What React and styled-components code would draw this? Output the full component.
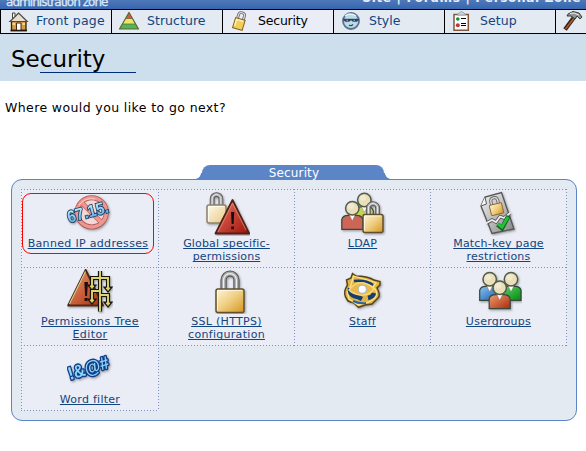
import React from "react";
import styled, { createGlobalStyle } from "styled-components";

const Global = createGlobalStyle`
  * { box-sizing: border-box; }
  body { margin: 0; background: #fff; overflow: hidden; font-family: "DejaVu Sans", sans-serif; color: #000; }
  svg { display: block; flex: none; }
`;

const Page = styled.div`
  width: 586px;
  height: 451px;
  overflow: hidden;
`;

const TopBar = styled.header`
  display: flex;
  justify-content: space-between;
  align-items: flex-end;
  height: 9px;
  padding: 0 5px 0 6px;
  overflow: hidden;
  background: linear-gradient(#4e79b9, #3766ae);
`;

const Brand = styled.span`
  font: 12px/14px "DejaVu Sans", sans-serif;
  letter-spacing: -0.95px;
  -webkit-text-stroke: 0.3px #d9e8fa;
  color: #d9e8fa;
  white-space: pre;
`;

const SiteLinks = styled.span`
  font: bold 12px/14px "DejaVu Sans", sans-serif;
  letter-spacing: 0.68px;
  margin-bottom: 4px;
  color: #e6effa;
  white-space: pre;
`;

const Nav = styled.nav`
  display: flex;
  height: 25px;
  width: 667px;
  border: solid #000;
  border-width: 1px 0;
  background: #e3eaf2;
`;

const NavItem = styled.a`
  display: flex;
  align-items: center;
  flex: 0 0 111px;
  padding-left: 3px;
  border-left: 1px solid #000;
  background: ${(p) => (p.$active ? "#eaedf5" : "#e3eaf2")};
  color: ${(p) => (p.$active ? "#000" : "#124480")};
  font-size: 12.5px;
  line-height: 22px;
  letter-spacing: ${(p) => p.$spacing || 0}px;
  white-space: nowrap;
  svg { margin-right: 4px; }
  span { padding-bottom: 2px; }
`;

const TitleBand = styled.div`
  height: 47px;
  padding-left: 11px;
  background: #cddeec;
`;

const Title = styled.h1`
  margin: 0;
  height: 38px;
  padding-top: 9px;
  font-size: 23px;
  line-height: 32px;
  font-weight: 400;
  letter-spacing: 0;
`;

const TitleRule = styled.div`
  width: 96px;
  height: 1px;
  margin-left: 29px;
  background: #002e78;
`;

const Question = styled.p`
  margin: 19px 0 0 5px;
  height: 65px;
  font-size: 12.5px;
  line-height: 16px;
  letter-spacing: 0.39px;
`;

const PanelTab = styled.div`
  position: relative;
  display: flex;
  justify-content: center;
  width: 182px;
  height: 14px;
  margin: 0 0 0 202px;
  padding-left: 2px;
  border-radius: 8px 8px 0 0;
  background: #5b85c6;
  color: #fff;
  font-size: 12px;
  line-height: 16px;
  letter-spacing: 0.15px;

  &::before,
  &::after {
    content: "";
    position: absolute;
    bottom: 0;
    width: 7px;
    height: 6px;
  }
  &::before {
    right: 100%;
    background: radial-gradient(circle at 0 0, transparent 5.5px, #5b85c6 6.2px);
  }
  &::after {
    left: 100%;
    background: radial-gradient(circle at 100% 0, transparent 5.5px, #5b85c6 6.2px);
  }
`;

const Panel = styled.section`
  width: 566px;
  height: 242px;
  margin-left: 11px;
  padding: 9px;
  border: 1px solid #5b85c6;
  border-radius: 11px;
  background: #e3eaf1;
`;

const Grid = styled.div`
  display: grid;
  grid-template-columns: 137px 136px 136px 136px;
  grid-template-rows: 78px 78px 65px;
  width: 546px;
  height: 222px;
`;

const dots = (dir) =>
  `repeating-linear-gradient(${dir}, #7f90bd 0 1px, transparent 1px 3px)`;

const Cell = styled.div`
  display: flex;
  flex-direction: column;
  align-items: center;
  margin: 0 -1px -1px 0;
  padding-top: 1px;
  background:
    ${dots("to right")} top / 100% 1px no-repeat,
    ${dots("to right")} bottom / 100% 1px no-repeat,
    ${dots("to bottom")} left / 1px 100% no-repeat,
    ${dots("to bottom")} right / 1px 100% no-repeat,
    #eaedf5;
`;

const Highlight = styled.div`
  display: flex;
  flex-direction: column;
  align-items: center;
  width: 132px;
  height: 61px;
  margin: 3px 4px 0 0;
  border: 1px solid #f00;
  border-radius: 9px;
  svg { margin: -4px 0 0 2px; }
`;

const Label = styled.a`
  display: block;
  margin-top: 1px;
  color: #124480;
  font-size: 11px;
  line-height: 13px;
  letter-spacing: ${(p) => p.$spacing || 0}px;
  text-align: center;
  text-decoration: underline;
  text-underline-offset: 1px;
  text-decoration-skip-ink: none;
  white-space: pre;
`;

const IconFrame = ({ children }) => (
  <svg width="46" height="46" viewBox="0 0 46 46">
    <defs>
      <linearGradient id="gold" x1="0" y1="0" x2="1" y2="1">
        <stop offset="0" stopColor="#fff7d8" /><stop offset=".5" stopColor="#efce80" /><stop offset="1" stopColor="#d69420" />
      </linearGradient>
      <linearGradient id="paleGold" x1="0" y1="0" x2="1" y2="1">
        <stop offset="0" stopColor="#fffbea" /><stop offset="1" stopColor="#e7c884" />
      </linearGradient>
      <linearGradient id="red" x1="0" y1="0" x2="1" y2="1">
        <stop offset="0" stopColor="#ed7768" /><stop offset="1" stopColor="#9e1208" />
      </linearGradient>
      <linearGradient id="rust" x1="0" y1="0" x2="1" y2="1">
        <stop offset="0" stopColor="#ef9c70" /><stop offset="1" stopColor="#a82a0b" />
      </linearGradient>
      <linearGradient id="blue" x1="0" y1="0" x2="1" y2="1">
        <stop offset="0" stopColor="#8bc4f3" /><stop offset="1" stopColor="#1558a8" />
      </linearGradient>
      <linearGradient id="green" x1="0" y1="0" x2="1" y2="1">
        <stop offset="0" stopColor="#59d767" /><stop offset="1" stopColor="#078910" />
      </linearGradient>
      <linearGradient id="steel" x1="0" y1="0" x2="1" y2="1">
        <stop offset="0" stopColor="#f4f4f4" /><stop offset="1" stopColor="#858585" />
      </linearGradient>
      <linearGradient id="ice" x1="0" y1="0" x2="0" y2="1">
        <stop offset="0" stopColor="#d5f8ff" /><stop offset="1" stopColor="#47a2e7" />
      </linearGradient>
      <filter id="soft" x="-20%" y="-20%" width="150%" height="150%">
        <feDropShadow dx="1" dy="1.2" stdDeviation=".8" floodColor="#444" floodOpacity=".5" />
      </filter>
    </defs>
    <g filter="url(#soft)">{children}</g>
  </svg>
);

const Padlock = ({ x, y, w, h, rise, fill = "gold", edge = "#60502f" }) => {
  const l = x + w * 0.27;
  const r = x + w * 0.73;
  const radius = (r - l) / 2;
  const d = `M${l} ${y + 1}V${y - rise + radius}A${radius} ${radius} 0 0 1 ${r} ${y - rise + radius}V${y + 1}`;
  const k = w > 24 ? 1.25 : 0.95;
  return (
    <g>
      <path d={d} fill="none" stroke="#575757" strokeWidth={5 * k} />
      <path d={d} fill="none" stroke="#a9a9a9" strokeWidth={3.2 * k} />
      <path d={d} fill="none" stroke="#efefef" strokeWidth={1 * k} />
      <rect x={x} y={y} width={w} height={h} rx="2" fill={`url(#${fill})`} stroke={edge} strokeWidth="1.5" />
      <path d={`M${x + 1.5} ${y + h - 2}V${y + 1.5}H${x + w - 2}`} fill="none" stroke="#fff" strokeOpacity=".65" />
    </g>
  );
};

const Person = ({ cx, cy, fill, w = 20 }) => (
  <g>
    <path
      d={`M${cx - w / 2} ${cy + 21}V${cy + 11}Q${cx - w / 2 + 1} ${cy + 7} ${cx - 4} ${cy + 7}H${cx + 4}Q${cx + w / 2 - 1} ${cy + 7} ${cx + w / 2} ${cy + 11}V${cy + 21}Z`}
      fill={fill} stroke="#36483c" strokeWidth="1.2"
    />
    <path d={`M${cx - 3.2} ${cy + 6}L${cx} ${cy + 12.5}L${cx + 3.2} ${cy + 6}Z`} fill="#fff" stroke="#866" strokeWidth=".4" />
    <circle cx={cx} cy={cy} r="6.7" fill="#eadfb8" stroke="#505d4b" strokeWidth="1.5" />
    <ellipse cx={cx - 1.5} cy={cy - 2} rx="3.3" ry="2.7" fill="#fff" opacity=".35" />
  </g>
);

const art = {
  banned: (
    <>
      <g fill="none">
        <circle cx="25.7" cy="22.3" r="14.6" fill="#f4d6d5" stroke="#a95b59" strokeWidth="5" />
        <path d="M15 12L36 33" stroke="#b56b69" strokeWidth="5" />
        <circle cx="25.7" cy="22.3" r="14.6" stroke="#ee9690" strokeWidth="3.5" />
        <path d="M15 12L36 33" stroke="#ee9690" strokeWidth="3.5" />
        <path d="M13 15Q19 7 29 9" stroke="#ffd1c9" strokeWidth="1" />
      </g>
      <text x="3" y="33" transform="rotate(-15 3 33)" fontFamily="Liberation Sans" fontSize="17" fontWeight="bold"
        textLength="42" lengthAdjust="spacingAndGlyphs" fill="url(#ice)" stroke="#17395c" strokeWidth="1.8" paintOrder="stroke">67.15.</text>
    </>
  ),
  warning: (
    <>
      <Padlock x={3} y={15} w={19} h={18} rise={10.5} fill="paleGold" edge="#8e836c" />
      <path d="M28.5 10L11.5 43.5H45.2Z" fill="url(#red)" stroke="#502018" strokeWidth="1.8" strokeLinejoin="round" />
      <path d="M14 42L28.5 13L42 40" fill="none" stroke="#f29383" strokeWidth=".7" />
      <path d="M27 22H30.3L29.6 34H27.7ZM27.3 36.5H30V39.3H27.3Z" fill="#180b08" />
    </>
  ),
  ldap: (
    <>
      <Person cx={24.3} cy={10} fill="#c5d356" w={18} />
      <Person cx={12.3} cy={18.3} fill="#ce6658" w={21} />
      <Padlock x={23} y={24.5} w={20} h={18} rise={11} />
    </>
  ),
  matchKey: (
    <>
      <path d="M5 16L9 7L25.5 2.5L38 39L16 43.5Z" fill="url(#steel)" stroke="#555" strokeWidth="1.3" />
      <path d="M5 16L10.5 14L9 7" fill="#fafafa" stroke="#555" />
      <path d="M11 33L16 30L20 32L24 26.5L28 28L34 23" fill="none" stroke="#555" strokeWidth="3.5" />
      <path d="M10 33.3L16 30L20 32L24 26.5L28 28L34.5 22.7" fill="none" stroke="#eee" strokeWidth="1.8" />
      <g transform="rotate(-14 20 18)">
        <path d="M16.5 14V11Q16.5 7.5 20 7.5T23.5 11V14" fill="none" stroke="#666" strokeWidth="3.2" />
        <path d="M16.5 14V11Q16.5 7.5 20 7.5T23.5 11V14" fill="none" stroke="#ddd" strokeWidth="1.4" />
        <rect x="14" y="14" width="12.5" height="10.5" rx="1" fill="url(#gold)" stroke="#8e6b2d" />
      </g>
      <path d="M21.5 34.5L26 38L32.5 26" fill="none" stroke="#11651c" strokeWidth="4.7" />
      <path d="M22 34L26 37L32 27" fill="none" stroke="#28bd3a" strokeWidth="3" />
    </>
  ),
  tree: (
    <>
      <path d="M18.7 2L1.2 37.5H36Z" fill="url(#rust)" stroke="#4e2b15" strokeWidth="2" strokeLinejoin="round" />
      <path d="M2.5 36L18.5 3.5" stroke="#e4cf94" strokeWidth="1.2" />
      <path d="M17.3 14H21L20 28H18.2ZM17.5 30H20.5V33H17.5Z" fill="#200e08" />
      {[["#17150c", 4.2], ["#ded56f", 1.9]].map(([stroke, width]) => (
        <g key={stroke} fill={stroke} stroke={stroke} strokeWidth={width}>
          <path d="M33 3V43.5M25 19V10H41V20M25 33V23H33M33 27H41V35" fill="none" />
          <path d="M23 18H27L25 20.5ZM39 20H43L41 22.5ZM23 32H27L25 34.5ZM39 35H43L41 37.5Z" strokeWidth={width - 1} />
        </g>
      ))}
    </>
  ),
  padlock: <Padlock x={12} y={21} w={28} h={23.5} rise={15.5} />,
  staff: (
    <>
      <path d="M12.5 5.5L16 8Q27 8 34 12L40 13.5V17L37 20Q41 27 38 30L32 36L25 37L18.5 39.5L14 35L8 33L5.5 29Q3 24 7.5 17L6.5 12L11 10Z" fill="#dfb443" stroke="#56441e" strokeWidth="1.5" />
      <path d="M13.5 8L31 13L36 15L33 19Q39 24 35 30L29 34L18 37L9 31L7.5 24L11 17Z" fill="none" stroke="#ffe58a" strokeWidth="1.3" />
      <path d="M14 13Q26 12 33 17" fill="none" stroke="#123e77" strokeWidth="2.5" />
      <path d="M10 20Q9 28 18 29L22 31M28 30Q33 29 34 25" fill="none" stroke="#123e77" strokeWidth="4.5" />
      <path d="M9 22Q16 13 24 15Q31 17 34 21Q29 28 20 27Q13 26 9 22Z" fill="#eaba48" stroke="#fadc76" strokeWidth="1.4" />
      <circle cx="22.3" cy="21.3" r="4.2" fill="#fff" stroke="#b9bbb6" strokeWidth="1.4" />
      <path d="M13 33Q19 36 26 35" fill="none" stroke="#2a65a8" strokeWidth="2" />
    </>
  ),
  groups: (
    <>
      <Person cx={13.7} cy={11.3} fill="url(#blue)" />
      <Person cx={35} cy={11.3} fill="url(#green)" />
      <Person cx={23.7} cy={19.7} fill="url(#rust)" w={21} />
    </>
  ),
  words: (
    <text x="3" y="34" transform="rotate(-17 3 34)" fontFamily="Liberation Sans" fontSize="18" fontWeight="bold"
      textLength="42" lengthAdjust="spacingAndGlyphs" fill="#8cd6fb" stroke="#123d88" strokeWidth="2.8" strokeLinejoin="round" paintOrder="stroke">!&amp;@#</text>
  ),
};

const NavFrame = ({ children }) => <svg width="28" height="23" viewBox="0 0 28 23">{children}</svg>;

const navItems = [
  {
    text: "Front page", spacing: 0.2, icon: (
      <>
        <path d="M8.5 8V3H11V6" fill="#fff" stroke="#444" />
        <path d="M7.5 11V20.5H22V11" fill="#d69b48" stroke="#36220b" strokeWidth="1.3" />
        <path d="M14.7 3L6 11.5H23.2Z" fill="#e6dfcf" stroke="#4e4a43" strokeWidth="1.2" />
        <path d="M12.5 20V13H17V20" fill="#fff" stroke="#4b2b0c" />
        <path d="M8.5 14H11M18.5 14H21" stroke="#f8d58d" strokeWidth="2" />
        <path d="M6.5 20.5H23" stroke="#24170a" strokeWidth="1.5" />
      </>
    ),
  },
  {
    text: "Structure", spacing: 0.05, icon: (
      <>
        <path d="M14 2.5L4.5 19H23.5Z" fill="#54b554" />
        <path d="M14 2.5L7.3 14H20.7Z" fill="#eee36d" />
        <path d="M14 2.5L10.5 8.5H17.5Z" fill="#e45342" />
        <path d="M14 2.5L4.5 19H23.5Z" fill="none" stroke="#5e6634" strokeWidth="1.2" strokeLinejoin="round" />
        <path d="M10.5 8.5H17.5M7 14H21" stroke="#626c3e" strokeWidth=".8" />
      </>
    ),
  },
  {
    text: "Security", active: true, spacing: -0.2, icon: (
      <g transform="rotate(17 14 12)">
        <path d="M10.5 10V5Q10.5 2.5 13.5 2.5T16.5 5V10" fill="none" stroke="#666" strokeWidth="2.8" />
        <path d="M10.5 10V5Q10.5 2.5 13.5 2.5T16.5 5V10" fill="none" stroke="#ddd" strokeWidth="1.2" />
        <path d="M8.5 9H18.5V19.5H8.5Z" fill="#f0cf58" stroke="#80601f" />
        <path d="M10 17V10.5H17" stroke="#fff5bb" strokeWidth="1.4" fill="none" />
      </g>
    ),
  },
  {
    text: "Style", icon: (
      <>
        <circle cx="14" cy="11" r="8" fill="#b8dde4" stroke="#5e6f91" strokeWidth="1.8" />
        <path d="M8 6Q13 2 19 6" stroke="#e5f7f7" fill="none" strokeWidth="1.5" />
        <path d="M6 9H22L20 11.5H16L14 10L12 11.5H8Z" fill="#343861" stroke="#343861" strokeWidth=".4" />
        <path d="M9.5 10.3H11M16.5 10.3H18" stroke="#7fc1dd" />
        <path d="M12 15Q14 16.5 16 14.5" fill="none" stroke="#284965" strokeWidth="1.1" />
      </>
    ),
  },
  {
    text: "Setup", spacing: 0.1, icon: (
      <>
        <path d="M6 4.5H20.3V20.3H6Z" fill="#fff" stroke="#81583e" strokeWidth="1.5" />
        <path d="M9 5L11 3L13.3 1.5L16 3L18 5Z" fill="#ccd8df" stroke="#7e8b92" strokeWidth=".7" />
        <circle cx="9.8" cy="9" r="1.8" fill="#188b2e" />
        <circle cx="9.8" cy="15.2" r="2" fill="#ba3836" />
        <path d="M13 8.5H18M13 13.5H18M13 15.5H18" stroke="#000" />
      </>
    ),
  },
  {
    text: "", icon: (
      <>
        <path d="M16 6L6 19.5" stroke="#3d2211" strokeWidth="4.2" />
        <path d="M15.5 7.5L6.5 19" stroke="#9b6039" strokeWidth="1.7" />
        <path d="M9 4L14 1.5L20 3L23 7L21 9L18 6L16 9L12 6L8 6Z" fill="#929492" stroke="#373c3a" />
        <path d="M11 3.5L15 3L20 5" fill="none" stroke="#eee" />
      </>
    ),
  },
];

const entries = [
  { icon: "banned", text: "Banned IP addresses", spacing: 0.32, highlight: true },
  { icon: "warning", text: "Global specific-\npermissions", spacing: 0.16 },
  { icon: "ldap", text: "LDAP", spacing: 0.2 },
  { icon: "matchKey", text: "Match-key page\nrestrictions", spacing: 0.2 },
  { icon: "tree", text: "Permissions Tree\nEditor", spacing: 0.4 },
  { icon: "padlock", text: "SSL (HTTPS)\nconfiguration", spacing: 0.3 },
  { icon: "staff", text: "Staff", spacing: 0.2 },
  { icon: "groups", text: "Usergroups", spacing: 0.27 },
  { icon: "words", text: "Word filter", spacing: 0.27 },
];

const Entry = ({ icon, text, spacing }) => (
  <>
    <IconFrame>{art[icon]}</IconFrame>
    <Label $spacing={spacing}>{text}</Label>
  </>
);

export default function App() {
  return (
    <Page>
      <Global />
      <TopBar>
        <Brand>administration zone</Brand>
        <SiteLinks>Site | Forums | Personal Zone</SiteLinks>
      </TopBar>
      <Nav>
        {navItems.map((item, i) => (
          <NavItem key={i} $active={item.active} $spacing={item.spacing}>
            <NavFrame>{item.icon}</NavFrame>
            <span>{item.text}</span>
          </NavItem>
        ))}
      </Nav>
      <TitleBand>
        <Title>Security</Title>
        <TitleRule />
      </TitleBand>
      <Question>Where would you like to go next?</Question>
      <PanelTab>Security</PanelTab>
      <Panel>
        <Grid>
          {entries.map((e) => (
            <Cell key={e.icon}>
              {e.highlight ? <Highlight><Entry {...e} /></Highlight> : <Entry {...e} />}
            </Cell>
          ))}
        </Grid>
      </Panel>
    </Page>
  );
}
